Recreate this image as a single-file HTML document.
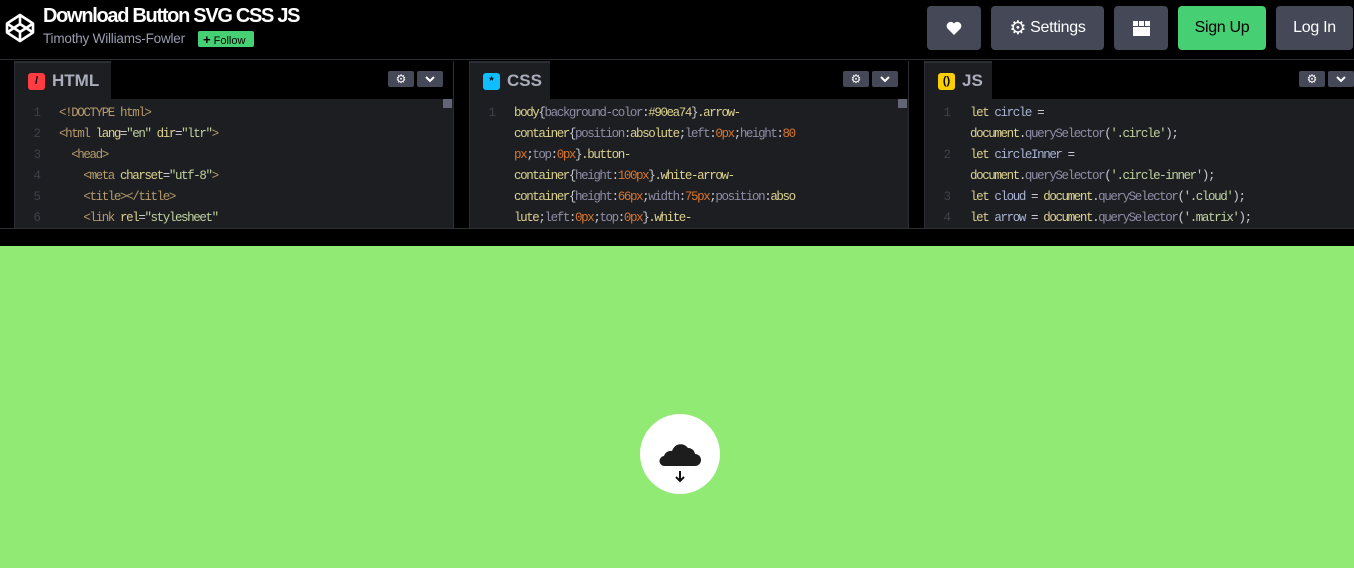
<!DOCTYPE html>
<html><head><style>
*{margin:0;padding:0;box-sizing:border-box}
body{width:1354px;height:568px;background:#000;font-family:"Liberation Sans",sans-serif;overflow:hidden;position:relative}
.hdr{position:absolute;left:0;top:0;width:1354px;height:60px;background:#000;border-bottom:1px solid #2c2d33}
.title{position:absolute;left:43px;top:5px;color:#fff;font-size:20px;font-weight:bold;letter-spacing:-1.3px}
.author{position:absolute;left:43px;top:31px;color:#9a9db0;font-size:13.5px;letter-spacing:-0.2px}
.follow{position:absolute;left:198px;top:31px;width:56px;height:16px;background:#47cf73;color:#000;font-size:11px;padding:1px 0 0 5px;border-radius:2px}
.btn{position:absolute;top:6px;height:44px;background:#444857;border-radius:4px;color:#fff;font-size:16px;display:flex;align-items:center;justify-content:center;letter-spacing:-0.3px}
.panel{position:absolute;top:61px;height:167px;background:#1d1e22;border-left:1px solid #2c2d33;border-right:1px solid #2c2d33}
.tabbar{position:absolute;left:0;top:0;right:0;height:38px;background:#000}
.tab{position:absolute;left:0;top:0;height:38px;background:#1d1e22;border-top:2px solid #2c2d33;color:#aaaebc;font-weight:bold;font-size:17px;display:flex;align-items:center;padding-left:13px}
.ico{width:17px;height:17px;border-radius:3px;margin-right:7px;display:inline-flex;align-items:center;justify-content:center;font-size:11px;color:#000}
.sb{position:absolute;top:10px;height:16px;background:#444857;border-radius:2px;display:flex;align-items:center;justify-content:center}
.code{position:absolute;top:42px;left:0;font-family:"Liberation Mono",monospace;font-size:12.5px;letter-spacing:-1.4px;line-height:21px;color:#c9cad3;white-space:pre}
.ln{position:absolute;left:0;width:26px;text-align:right;color:#3f4049;letter-spacing:0}
.t{color:#b59a6a}.a{color:#dcd28f}.s{color:#bfd2a0}.p{color:#8e8ea6}.n{color:#d9762d}.v{color:#a9b4d4}
.scroll{position:absolute;right:0;top:38px;width:9px;height:9px;background:#626575}
</style></head><body>
<div class="hdr">
<svg style="position:absolute;left:4px;top:12px" width="32" height="32" viewBox="0 0 32 32" fill="none" stroke="#fff" stroke-width="2.6" stroke-linejoin="round"><path d="M16 3 L29 11.5 L29 20.5 L16 29 L3 20.5 L3 11.5 Z M3 11.5 L16 20 L29 11.5 M3 20.5 L16 12 L29 20.5 M16 3 V12 M16 20 V29"/></svg>
<div class="title">Download Button SVG CSS JS</div>
<div class="author">Timothy Williams-Fowler</div>
<div class="follow"><b style="font-size:13px">+</b> Follow</div>
<div class="btn" style="left:927px;width:54px"><svg width="16" height="15" viewBox="0 0 16 15"><path d="M8 14 L1.5 7.5 A3.8 3.8 0 0 1 8 2.5 A3.8 3.8 0 0 1 14.5 7.5 Z" fill="#fff"/></svg></div>
<div class="btn" style="left:991px;width:113px"><span style="font-size:19px;margin-right:4px">⚙</span>Settings</div>
<div class="btn" style="left:1114px;width:54px"><svg width="17" height="15"><rect x="0" y="0" width="5" height="5" fill="#fff"/><rect x="6" y="0" width="5" height="5" fill="#fff"/><rect x="12" y="0" width="5" height="5" fill="#fff"/><rect x="0" y="6" width="17" height="9" fill="#fff"/></svg></div>
<div class="btn" style="left:1178px;width:88px;background:#47cf73;color:#000">Sign Up</div>
<div class="btn" style="left:1276px;width:77px">Log In</div>
</div>

<div class="panel" style="left:14px;width:440px">
<div class="tabbar"></div>
<div class="tab" style="width:96px"><span class="ico" style="background:#ff3c41">/</span>HTML</div>
<div class="sb" style="left:373px;width:26px"><span style="color:#fff;font-size:12px">⚙</span></div><div class="sb" style="left:402px;width:26px"><svg width="12" height="8"><path d="M2 2 L6 6 L10 2" stroke="#fff" stroke-width="2" fill="none"/></svg></div>
<div class="scroll" style="right:1px"></div>
<div class="code" style="left:0;width:420px">
<span class="ln" style="top:0">1</span><span class="ln" style="top:21px">2</span><span class="ln" style="top:42px">3</span><span class="ln" style="top:63px">4</span><span class="ln" style="top:84px">5</span><span class="ln" style="top:105px">6</span><div style="position:absolute;left:44px;top:0"><span class="t">&lt;!DOCTYPE html&gt;</span>
<span class="t">&lt;html</span> <span class="a">lang</span>=<span class="s">"en"</span> <span class="a">dir</span>=<span class="s">"ltr"</span><span class="t">&gt;</span>
  <span class="t">&lt;head&gt;</span>
    <span class="t">&lt;meta</span> <span class="a">charset</span>=<span class="s">"utf-8"</span><span class="t">&gt;</span>
    <span class="t">&lt;title&gt;&lt;/title&gt;</span>
    <span class="t">&lt;link</span> <span class="a">rel</span>=<span class="s">"stylesheet"</span></div></div>
</div>

<div class="panel" style="left:469px;width:440px">
<div class="tabbar"></div>
<div class="tab" style="width:80px"><span class="ico" style="background:#0ebeff">*</span>CSS</div>
<div class="sb" style="left:373px;width:26px"><span style="color:#fff;font-size:12px">⚙</span></div><div class="sb" style="left:402px;width:26px"><svg width="12" height="8"><path d="M2 2 L6 6 L10 2" stroke="#fff" stroke-width="2" fill="none"/></svg></div>
<div class="scroll" style="right:1px"></div>
<div class="code"><span class="ln" style="top:0">1</span><div style="position:absolute;left:44px;top:0"><span class="a">body</span>{<span class="p">background-color</span>:<span class="a">#90ea74</span>}<span class="a">.arrow-</span>
<span class="a">container</span>{<span class="p">position</span>:<span class="a">absolute</span>;<span class="p">left</span>:<span class="n">0px</span>;<span class="p">height</span>:<span class="n">80</span>
<span class="n">px</span>;<span class="p">top</span>:<span class="n">0px</span>}<span class="a">.button-</span>
<span class="a">container</span>{<span class="p">height</span>:<span class="n">100px</span>}<span class="a">.white-arrow-</span>
<span class="a">container</span>{<span class="p">height</span>:<span class="n">66px</span>;<span class="p">width</span>:<span class="n">75px</span>;<span class="p">position</span>:<span class="a">abso</span>
<span class="a">lute</span>;<span class="p">left</span>:<span class="n">0px</span>;<span class="p">top</span>:<span class="n">0px</span>}<span class="a">.white-</span></div></div>
</div>

<div class="panel" style="left:924px;width:431px;border-right:none">
<div class="tabbar"></div>
<div class="tab" style="width:67px"><span class="ico" style="background:#fcd000">()</span>JS</div>
<div class="sb" style="left:374px;width:26px"><span style="color:#fff;font-size:12px">⚙</span></div><div class="sb" style="left:403px;width:26px"><svg width="12" height="8"><path d="M2 2 L6 6 L10 2" stroke="#fff" stroke-width="2" fill="none"/></svg></div>
<div class="code"><span class="ln" style="top:0">1</span><span class="ln" style="top:42px">2</span><span class="ln" style="top:84px">3</span><span class="ln" style="top:105px">4</span><div style="position:absolute;left:45px;top:0"><span class="a">let</span> <span class="v">circle</span> =
<span class="a">document</span>.<span class="p">querySelector</span>(<span class="s">'.circle'</span>);
<span class="a">let</span> <span class="v">circleInner</span> =
<span class="a">document</span>.<span class="p">querySelector</span>(<span class="s">'.circle-inner'</span>);
<span class="a">let</span> <span class="v">cloud</span> = <span class="a">document</span>.<span class="p">querySelector</span>(<span class="s">'.cloud'</span>);
<span class="a">let</span> <span class="v">arrow</span> = <span class="a">document</span>.<span class="p">querySelector</span>(<span class="s">'.matrix'</span>);</div></div>
</div>

<div style="position:absolute;left:0;top:228px;width:1354px;height:1px;background:#2c2d33"></div>
<div style="position:absolute;left:0;top:246px;width:1354px;height:322px;background:#90ea74"></div>
<div style="position:absolute;left:640px;top:414px;width:80px;height:80px;border-radius:50%;background:#fff"></div>
<svg style="position:absolute;left:659px;top:438px" width="42" height="46" viewBox="0 0 42 46"><path d="M6 28 A5 5 0 0 1 5 18 A7 7 0 0 1 13 13 A9 9 0 0 1 29 10 A7 7 0 0 1 36 16 A6 6 0 0 1 36 28 Z" fill="#1d1d1d"/><path d="M21 33 V43 M17 39 L21 43 L25 39" stroke="#111" stroke-width="2" fill="none"/></svg>
</body></html>
